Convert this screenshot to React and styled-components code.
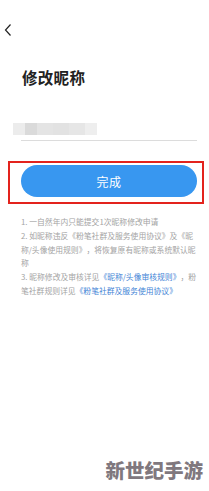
import { createGlobalStyle, styled } from "styled-components";

const Global = createGlobalStyle`
  html, body {
    margin: 0;
    padding: 0;
    background: #fff;
    font-family: "Noto Sans CJK SC", "Noto Sans", sans-serif;
  }
`;

const Page = styled.div`
  position: relative;
  width: 209px;
  height: 491px;
  overflow: hidden;
  background: #fff;
`;

const TopBar = styled.div`
  height: 60px;
  display: flex;
  align-items: center;
  padding-left: 3px;
`;

const Title = styled.h1`
  margin: 6px 0 0 22px;
  font-size: 15.5px;
  line-height: 22px;
  font-weight: 700;
  color: #222;
  letter-spacing: 0.3px;
`;

const Field = styled.div`
  margin: 35px 12px 0 21px;
  border-bottom: 1px solid #dcdcdc;
  padding-bottom: 5px;
`;

const Blur = styled.div`
  display: flex;
  margin-left: -8px;
  height: 12px;
`;

const Block = styled.span`
  width: ${(p) => p.w}px;
  background: ${(p) => p.c};
  filter: blur(0.6px);
`;

const Frame = styled.div`
  margin: 20px 5px 0 8px;
  border: 2px solid #e3231d;
  padding: 2px 5px 5px 11px;
`;

const Done = styled.button`
  display: block;
  width: 100%;
  height: 32px;
  border: 0;
  border-radius: 16px;
  background: #3897f0;
  color: #fff;
  font-family: inherit;
  font-size: 12px;
  letter-spacing: 0.5px;
`;

const Notes = styled.div`
  margin: 11px 10px 0 21px;
  font-size: 7.8px;
  line-height: 13.8px;
  color: #a3a3a3;
  text-spacing-trim: space-all;
`;

const Line = styled.p`
  margin: 0;
`;

const Link = styled.span`
  color: #3f84d6;
`;

const Mark = styled.div`
  position: absolute;
  right: 6px;
  bottom: 7px;
  font-size: 19.5px;
  font-weight: 900;
  color: #80787e;
`;

const blocks = [
  [12, "#ececec"],
  [12, "#dadada"],
  [16, "#e4e4e4"],
  [16, "#e2e2e2"],
  [16, "#e6e6e6"],
  [12, "#eeeeee"],
];

const App = () => (
  <Page>
    <Global />
    <TopBar>
      <svg width="10" height="14" viewBox="0 0 10 14">
        <path d="M7.5 1.5 L2.5 7 L7.5 12.5" fill="none" stroke="#222" strokeWidth="1.2" />
      </svg>
    </TopBar>
    <Title>修改昵称</Title>
    <Field>
      <Blur>
        {blocks.map(([w, c], i) => (
          <Block key={i} w={w} c={c} />
        ))}
      </Blur>
    </Field>
    <Frame>
      <Done type="button">完成</Done>
    </Frame>
    <Notes>
      <Line>1. 一自然年内只能提交1次昵称修改申请</Line>
      <Line>
        2. 如昵称违反《粉笔社群及服务使用协议》及《昵称/头像使用规则》，将恢复原有昵称或系统默认昵称
      </Line>
      <Line>
        3. 昵称修改及审核详见<Link>《昵称/头像审核规则》</Link>，粉笔社群规则详见<Link>《粉笔社群及服务使用协议》</Link>
      </Line>
    </Notes>
    <Mark>新世纪手游</Mark>
  </Page>
);

export default App;
